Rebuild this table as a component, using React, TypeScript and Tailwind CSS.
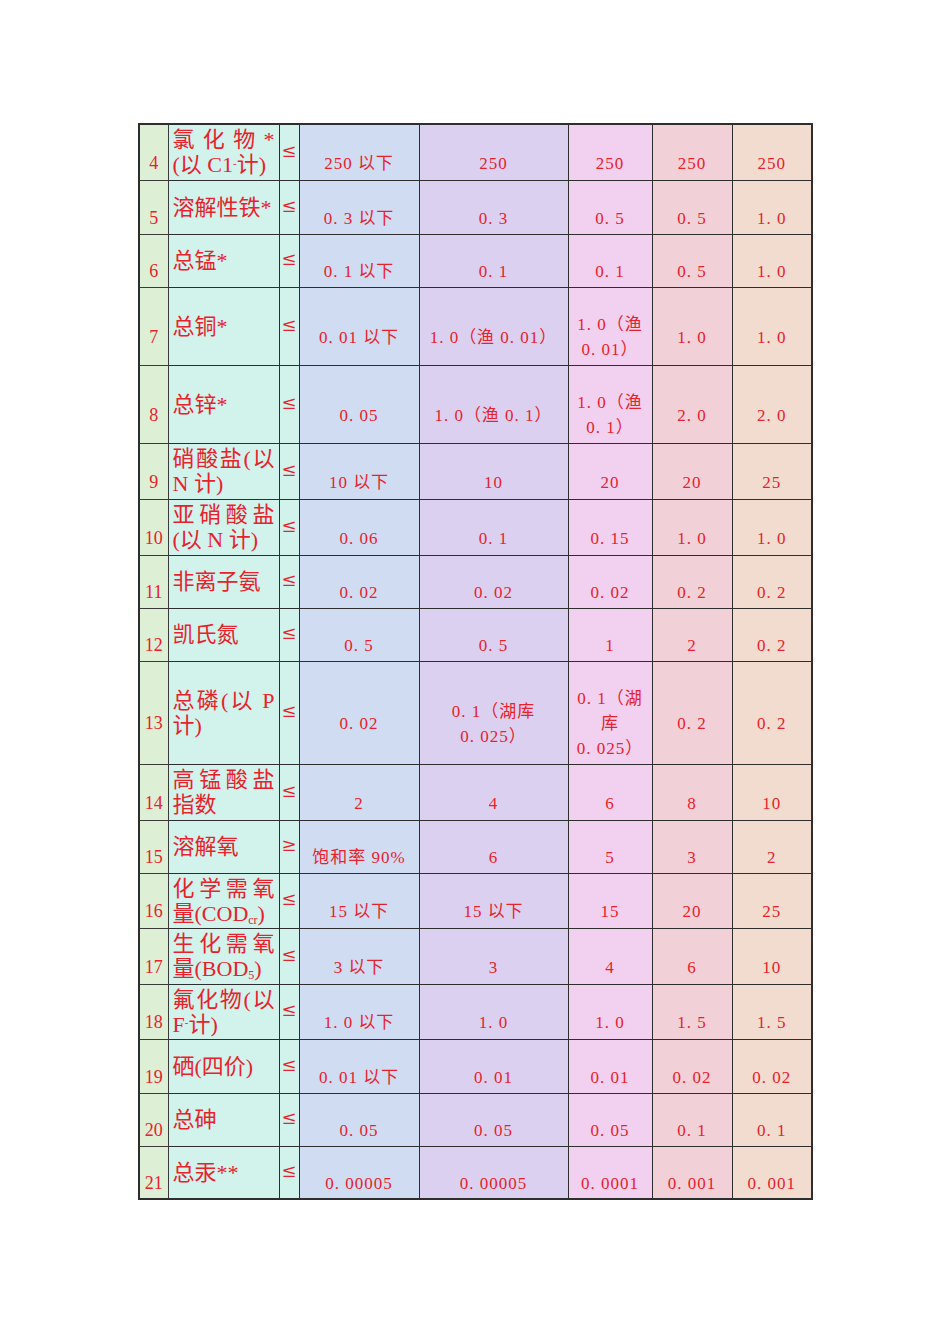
import React from 'react';

// 水质标准表（第 4 ~ 21 项）
type Row = {
  no: number;
  h: string;
  name: React.ReactNode;
  sign: string;
  vals: React.ReactNode[];
};

const J = ({ children }: { children: React.ReactNode }) => (
  <div className="text-justify [text-align-last:justify]">{children}</div>
);

const rows: Row[] = [
  {
    no: 4,
    h: 'h-[56px]',
    name: (
      <>
        <J>氯 化 物 *</J>
        <div>
          (以 C1<sup className="text-[11px]">-</sup>计)
        </div>
      </>
    ),
    sign: '≤',
    vals: ['250 以下', '250', '250', '250', '250'],
  },
  { no: 5, h: 'h-[54px]', name: '溶解性铁*', sign: '≤', vals: ['0. 3 以下', '0. 3', '0. 5', '0. 5', '1. 0'] },
  { no: 6, h: 'h-[53px]', name: '总锰*', sign: '≤', vals: ['0. 1 以下', '0. 1', '0. 1', '0. 5', '1. 0'] },
  {
    no: 7,
    h: 'h-[78px]',
    name: '总铜*',
    sign: '≤',
    vals: ['0. 01 以下', '1. 0（渔 0. 01）', <>1. 0（渔<br />0. 01）</>, '1. 0', '1. 0'],
  },
  {
    no: 8,
    h: 'h-[78px]',
    name: '总锌*',
    sign: '≤',
    vals: ['0. 05', '1. 0（渔 0. 1）', <>1. 0（渔<br />0. 1）</>, '2. 0', '2. 0'],
  },
  {
    no: 9,
    h: 'h-[56px]',
    name: (
      <>
        <J>硝酸盐(以</J>
        <div>N 计)</div>
      </>
    ),
    sign: '≤',
    vals: ['10 以下', '10', '20', '20', '25'],
  },
  {
    no: 10,
    h: 'h-[56px]',
    name: (
      <>
        <J>亚硝酸盐</J>
        <div>(以 N 计)</div>
      </>
    ),
    sign: '≤',
    vals: ['0. 06', '0. 1', '0. 15', '1. 0', '1. 0'],
  },
  { no: 11, h: 'h-[53px]', name: '非离子氨', sign: '≤', vals: ['0. 02', '0. 02', '0. 02', '0. 2', '0. 2'] },
  { no: 12, h: 'h-[53px]', name: '凯氏氮', sign: '≤', vals: ['0. 5', '0. 5', '1', '2', '0. 2'] },
  {
    no: 13,
    h: 'h-[103px]',
    name: (
      <>
        <J>总磷(以 P</J>
        <div>计)</div>
      </>
    ),
    sign: '≤',
    vals: ['0. 02', <>0. 1（湖库<br />0. 025）</>, <>0. 1（湖<br />库<br />0. 025）</>, '0. 2', '0. 2'],
  },
  {
    no: 14,
    h: 'h-[56px]',
    name: (
      <>
        <J>高锰酸盐</J>
        <div>指数</div>
      </>
    ),
    sign: '≤',
    vals: ['2', '4', '6', '8', '10'],
  },
  { no: 15, h: 'h-[53px]', name: '溶解氧', sign: '≥', vals: ['饱和率 90%', '6', '5', '3', '2'] },
  {
    no: 16,
    h: 'h-[55px]',
    name: (
      <>
        <J>化学需氧</J>
        <div>
          量(COD<sub className="text-[12px]">cr</sub>)
        </div>
      </>
    ),
    sign: '≤',
    vals: ['15 以下', '15 以下', '15', '20', '25'],
  },
  {
    no: 17,
    h: 'h-[56px]',
    name: (
      <>
        <J>生化需氧</J>
        <div>
          量(BOD<sub className="text-[12px]">5</sub>)
        </div>
      </>
    ),
    sign: '≤',
    vals: ['3 以下', '3', '4', '6', '10'],
  },
  {
    no: 18,
    h: 'h-[55px]',
    name: (
      <>
        <J>氟化物(以</J>
        <div>
          F<sup className="text-[11px]">-</sup>计)
        </div>
      </>
    ),
    sign: '≤',
    vals: ['1. 0 以下', '1. 0', '1. 0', '1. 5', '1. 5'],
  },
  { no: 19, h: 'h-[54px]', name: '硒(四价)', sign: '≤', vals: ['0. 01 以下', '0. 01', '0. 01', '0. 02', '0. 02'] },
  { no: 20, h: 'h-[53px]', name: '总砷', sign: '≤', vals: ['0. 05', '0. 05', '0. 05', '0. 1', '0. 1'] },
  { no: 21, h: 'h-[53px]', name: '总汞**', sign: '≤', vals: ['0. 00005', '0. 00005', '0. 0001', '0. 001', '0. 001'] },
];

const valBg = ['bg-[#d0dcf2]', 'bg-[#dcd0f0]', 'bg-[#f2d0ef]', 'bg-[#f2d0d8]', 'bg-[#f2dcd0]'];

const App = () => {
  return (
    <div className="min-h-[1344px] w-[950px] bg-white pt-[123px] pl-[138px] font-['Liberation_Serif','Noto_Sans_CJK_SC',serif] text-[#e8222c]">
      <table className="table-fixed border-collapse border-2 border-[#2e2e2e] w-[673px]">
        <colgroup>
          <col className="w-[29px]" />
          <col className="w-[111px]" />
          <col className="w-[20px]" />
          <col className="w-[120px]" />
          <col className="w-[149px]" />
          <col className="w-[84px]" />
          <col className="w-[80px]" />
          <col className="w-[80px]" />
        </colgroup>
        <tbody>
          {rows.map((r) => (
            <tr key={r.no} className={r.h}>
              <td className="border border-[#3a3a3a] bg-[#ddefd4] p-0 pt-[22px] text-center align-middle text-[18px] leading-[25px]">
                {r.no}
              </td>
              <td className="border border-[#2e2e2e] bg-[#d2f2ec] px-[4px] py-0 align-middle text-[22px] leading-[25px]">
                {r.name}
              </td>
              <td className="border border-[#2e2e2e] bg-[#d2f2ec] p-0 pb-[4px] text-center align-middle font-['DejaVu_Serif',serif] text-[18px] leading-[25px]">
                {r.sign}
              </td>
              {r.vals.map((v, i) => (
                <td
                  key={i}
                  className={`border border-[#2e2e2e] ${valBg[i]} p-0 pt-[22px] text-center align-middle text-[17px] leading-[25px] tracking-[1px]`}
                >
                  {v}
                </td>
              ))}
            </tr>
          ))}
        </tbody>
      </table>
    </div>
  );
};

export default App;
